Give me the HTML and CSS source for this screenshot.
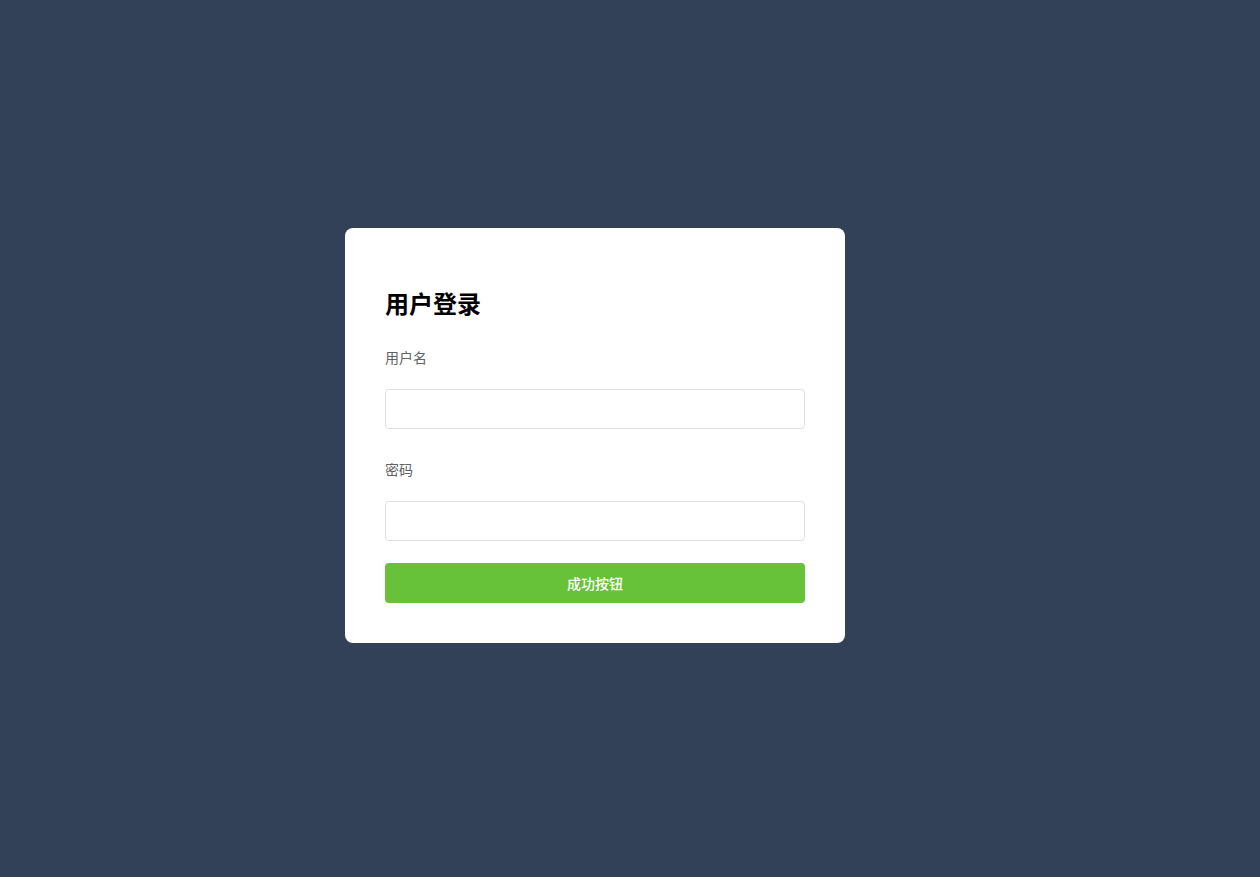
FILE: index.html
```html
<!DOCTYPE html>
<html lang="zh-CN">
<head>
  <meta charset="UTF-8">
  <title>用户登录</title>
  <meta name="viewport" content="width=device-width, initial-scale=1.0">
  <link rel="stylesheet" href="styles.css">
</head>
<body>
  <div class="page">
    <div class="login-box">
      <h2 class="login-title">用户登录</h2>
      <form class="login-form">
        <div class="form-item">
          <label for="username">用户名</label>
          <input type="text" id="username" name="username">
        </div>
        <div class="form-item">
          <label for="password">密码</label>
          <input type="password" id="password" name="password">
        </div>
        <button type="submit" class="btn-success">成功按钮</button>
      </form>
    </div>
  </div>
</body>
</html>
```

FILE: styles.css
```css
body {
  margin: 0;
  font-family: "Noto Sans CJK SC", "Noto Sans", sans-serif;
  background-color: #324157;
}

.page {
  min-height: 100vh;
  display: flex;
  align-items: center;
  justify-content: center;
  padding: 0 70px 6px 0;
  box-sizing: border-box;
}

.login-box {
  width: 500px;
  box-sizing: border-box;
  padding: 40px;
  background: #fff;
  border-radius: 8px;
}

.login-title {
  margin: 20px 0 21px;
  font-size: 24px;
  line-height: 30px;
  font-weight: bold;
  color: #000;
}

.form-item {
  margin-bottom: 22px;
}

.form-item label {
  display: block;
  line-height: 36px;
  padding-bottom: 14px;
  font-size: 14px;
  color: #606266;
}

.form-item input {
  display: block;
  width: 100%;
  height: 40px;
  box-sizing: border-box;
  padding: 0 15px;
  border: 1px solid #dcdfe6;
  border-radius: 4px;
  font-size: 14px;
  outline: none;
}

.form-item input:focus {
  border-color: #409eff;
}

.btn-success {
  display: block;
  width: 100%;
  height: 40px;
  padding-bottom: 2px;
  border: none;
  border-radius: 4px;
  background-color: #67c23a;
  color: #fff;
  font-family: inherit;
  font-size: 14px;
  font-weight: 500;
  cursor: pointer;
}

.btn-success:hover {
  background-color: #85ce61;
}
```
